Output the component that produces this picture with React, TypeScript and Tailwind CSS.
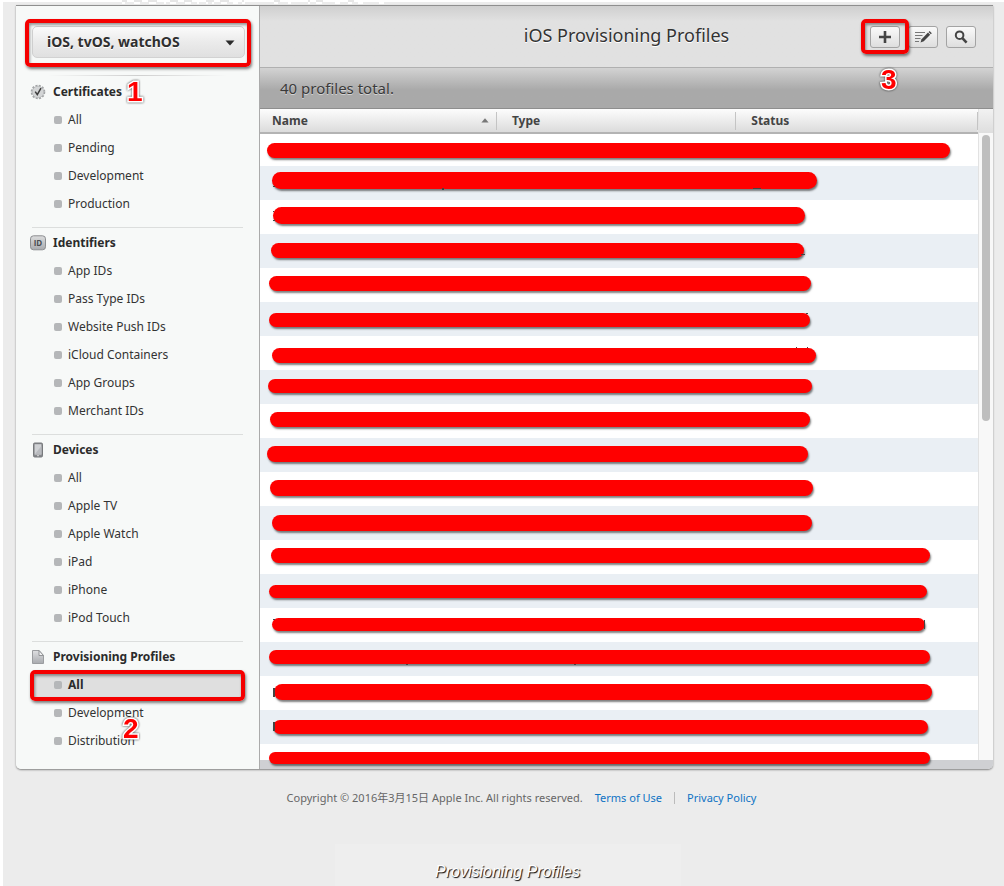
import React from "react";

type Section = { title: string; icon: React.ReactNode; items: string[]; active?: string };

const CertIcon = () => (
  <svg width="16" height="16" viewBox="0 0 16 16" aria-hidden="true">
    <circle cx="8" cy="8" r="6.3" fill="none" stroke="#a2a4a6" strokeWidth="2" strokeDasharray="2 1.3" />
    <circle cx="8" cy="8" r="5.8" fill="#d3d5d6" stroke="#b4b6b8" strokeWidth="0.8" />
    <path d="M5.2 7.6 L7.3 10.6 L11 4.2" fill="none" stroke="#3c3c3c" strokeWidth="1.5" />
  </svg>
);

const IdIcon = () => (
  <svg width="16" height="16" viewBox="0 0 16 16" aria-hidden="true">
    <defs>
      <linearGradient id="idFill" x1="0" y1="0" x2="0" y2="1">
        <stop offset="0" stopColor="#dcddde" />
        <stop offset="1" stopColor="#a9abae" />
      </linearGradient>
    </defs>
    <rect x="0.5" y="0.8" width="15" height="14" rx="3" fill="url(#idFill)" stroke="#8c8e91" />
    <text x="8" y="11" textAnchor="middle" fontSize="8" fontWeight="700" fill="#4a4c50" fontFamily="Open Sans, sans-serif">
      ID
    </text>
  </svg>
);

const DeviceIcon = () => (
  <svg width="16" height="16" viewBox="0 0 16 16" aria-hidden="true">
    <rect x="3.5" y="1" width="9" height="14" rx="1.2" fill="#85878b" stroke="#77797c" />
    <rect x="4.6" y="2.2" width="6.8" height="10.3" fill="#cfd1d4" />
    <path d="M4.6 12.5 L11.4 4 V12.5 Z" fill="#b9bbbf" />
    <rect x="7" y="13.2" width="2" height="1" fill="#d8d8d8" />
  </svg>
);

const FileIcon = () => (
  <svg width="16" height="16" viewBox="0 0 16 16" aria-hidden="true">
    <defs>
      <linearGradient id="fileFill" x1="0" y1="0" x2="0" y2="1">
        <stop offset="0" stopColor="#dfe0e2" />
        <stop offset="1" stopColor="#a8aaae" />
      </linearGradient>
    </defs>
    <path d="M2.5 1.5 H9 L13.5 6.5 V14.5 H2.5 Z" fill="url(#fileFill)" stroke="#9b9da0" />
    <path d="M9 1.5 V6.5 H13.5 Z" fill="#f3f3f4" stroke="#8b8d90" strokeWidth="0.9" />
  </svg>
);

const sections: Section[] = [
  { title: "Certificates", icon: <CertIcon />, items: ["All", "Pending", "Development", "Production"] },
  {
    title: "Identifiers",
    icon: <IdIcon />,
    items: ["App IDs", "Pass Type IDs", "Website Push IDs", "iCloud Containers", "App Groups", "Merchant IDs"],
  },
  {
    title: "Devices",
    icon: <DeviceIcon />,
    items: ["All", "Apple TV", "Apple Watch", "iPad", "iPhone", "iPod Touch"],
  },
  {
    title: "Provisioning Profiles",
    icon: <FileIcon />,
    items: ["All", "Development", "Distribution"],
    active: "All",
  },
];

type Box = { x: number; y: number; w: number; h: number };

/* Redaction strokes, one for each profile row, with the bits of row text that show past their edges. */
const strokes: (Box & { bits?: Box[] })[] = [
  { x: 7, y: 9, w: 683, h: 15 },
  { x: 12, y: 6, w: 545, h: 17, bits: [{ x: 13, y: 20, w: 2, h: 1 }, { x: 182, y: 22, w: 2, h: 2 }, { x: 493, y: 22, w: 8, h: 1 }] },
  { x: 13, y: 7, w: 532, h: 17, bits: [{ x: 13, y: 11, w: 1, h: 1 }, { x: 13, y: 20, w: 2, h: 1 }] },
  { x: 11, y: 9, w: 533, h: 15, bits: [{ x: 541, y: 20, w: 4, h: 1 }] },
  { x: 9, y: 8, w: 542, h: 15 },
  { x: 9, y: 11, w: 541, h: 14, bits: [{ x: 546, y: 11, w: 2, h: 1 }] },
  { x: 12, y: 12, w: 544, h: 15, bits: [{ x: 536, y: 11, w: 1, h: 1 }, { x: 547, y: 11, w: 1, h: 1 }] },
  { x: 8, y: 9, w: 544, h: 14 },
  { x: 10, y: 8, w: 540, h: 15 },
  { x: 7, y: 8, w: 541, h: 16 },
  { x: 10, y: 8, w: 543, h: 16 },
  { x: 12, y: 9, w: 540, h: 16 },
  { x: 11, y: 8, w: 659, h: 15 },
  { x: 9, y: 11, w: 658, h: 13 },
  { x: 12, y: 10, w: 653, h: 13, bits: [{ x: 13, y: 11, w: 2, h: 1 }, { x: 664, y: 12, w: 1, h: 9 }] },
  { x: 9, y: 8, w: 661, h: 14, bits: [{ x: 146, y: 22, w: 2, h: 1 }, { x: 314, y: 22, w: 2, h: 1 }] },
  { x: 14, y: 8, w: 658, h: 16, bits: [{ x: 13, y: 12, w: 2, h: 9 }] },
  { x: 13, y: 10, w: 655, h: 14, bits: [{ x: 13, y: 12, w: 2, h: 9 }] },
  { x: 9, y: 8, w: 661, h: 12 },
];

const Step = ({ n }: { n: number }) => (
  <span className="font-['Liberation_Sans',sans-serif] text-[28px] leading-none font-bold text-[#f00] [-webkit-text-stroke:3px_#fff] [paint-order:stroke_fill] drop-shadow-[0_0_1px_rgba(0,0,0,0.75)]">
    {n}
  </span>
);

const toolButton =
  "flex h-[22px] w-[30px] items-center justify-center rounded-[3px] border border-[#a3a3a3] bg-gradient-to-b from-[#fafafa] to-[#dedede] text-[#444]";

const redBox =
  "pointer-events-none absolute rounded-[5px] border-4 border-[#f50000] shadow-[1px_2px_3px_rgba(0,0,0,0.5),inset_1px_2px_3px_rgba(0,0,0,0.4)]";

function Sidebar() {
  return (
    <nav aria-label="Account resources" className="w-[244px] shrink-0 rounded-bl-[5px] border-r border-[#ababab] bg-[#f7f9f8] pb-3">
      <div className="relative mt-5 mr-3.5 ml-4 h-8">
        <select
          aria-label="Platform"
          className="h-full w-full appearance-none rounded-[5px] border border-[#d2d2d2] bg-gradient-to-b from-[#fbfbfb] via-[#ebebeb] to-[#e0e0e0] pl-3.5 text-sm font-bold text-[#2f2f2f] [text-shadow:0_1px_0_#fff]"
        >
          <option>iOS, tvOS, watchOS</option>
        </select>
        <svg className="pointer-events-none absolute top-3.5 right-2.5" width="10" height="6" viewBox="0 0 10 6" aria-hidden="true">
          <path d="M0.5 0.5 H9.5 L5 5.5 Z" fill="#2b2b2b" />
        </svg>
        <span className={`${redBox} -top-[7px] -right-1.5 -bottom-[9px] -left-[7px]`} />
      </div>
      <div className="mx-8 mt-[17px] h-px bg-gradient-to-r from-transparent via-[#cfcfcf] to-transparent" />
      <div className="mt-0.5 flex flex-col gap-[11px]">
        {sections.map((s, i) => (
          <section
            key={s.title}
            className={i ? "relative before:absolute before:inset-x-4 before:-top-0.5 before:h-px before:bg-[#dcdedd]" : "relative"}
          >
            <h2 className="flex h-7 items-center gap-[7px] pl-3.5 text-xs font-bold text-[#2b2b2b]">
              {s.icon}
              <span>{s.title}</span>
              {i === 0 && (
                <span className="absolute top-0 left-[111px]">
                  <Step n={1} />
                </span>
              )}
            </h2>
            <ul>
              {s.items.map((item) => {
                const active = s.active === item;
                return (
                  <li key={item} className="relative px-4">
                    <a
                      href="#"
                      aria-current={active ? "page" : undefined}
                      className={
                        active
                          ? "flex h-7 items-center gap-1.5 bg-[#dfdfdf] pl-[22px] text-xs font-bold text-[#2b2b2b]"
                          : "flex h-7 items-center gap-1.5 pl-[22px] text-xs text-[#333]"
                      }
                    >
                      <span className="size-2 rounded-xs bg-[#b5b7b9]" />
                      {item}
                    </a>
                    {active && <span className={`${redBox} inset-x-3.5 -top-px -bottom-0.5`} />}
                    {item === "Distribution" && (
                      <span className="absolute -top-3 left-[107px]">
                        <Step n={2} />
                      </span>
                    )}
                  </li>
                );
              })}
            </ul>
          </section>
        ))}
      </div>
    </nav>
  );
}

function Toolbar() {
  return (
    <header className="relative flex h-[62px] items-start justify-center border-b border-[#b0b0b0] bg-gradient-to-b from-[#cfcfcf] via-[#e1e1e1] via-25% to-[#e1e1e1]">
      <h1 className="mt-4 text-lg leading-[26px] text-[#333] [text-shadow:0_1px_0_#fff]">iOS Provisioning Profiles</h1>
      <div className="absolute top-5 right-[17px] flex gap-2">
        <div className="relative">
          <button type="button" aria-label="Add profile" className={toolButton}>
            <svg width="14" height="14" viewBox="0 0 14 14" aria-hidden="true">
              <path d="M7 1 V13 M1 7 H13" stroke="#444" strokeWidth="2.6" />
            </svg>
          </button>
          <span className={`${redBox} -inset-x-[9px] -top-[7px] -bottom-[6px]`} />
          <span className="absolute top-10 left-[11px]">
            <Step n={3} />
          </span>
        </div>
        <button type="button" aria-label="Edit profiles" className={toolButton}>
          <svg width="18" height="14" viewBox="0 0 18 14" aria-hidden="true">
            <path d="M1 2.5 H11 M1 5.5 H8.5 M1 8.5 H6.5 M1 11.5 H5" stroke="#777" strokeWidth="1" />
            <path d="M6.5 12.5 L7.6 9.2 L14 2.6 L16.2 4.8 L9.8 11.3 Z" fill="#444" />
            <path d="M14.6 2 L15.6 1 L17.8 3.2 L16.8 4.2 Z" fill="#444" />
          </svg>
        </button>
        <button type="button" aria-label="Search profiles" className={toolButton}>
          <svg width="14" height="14" viewBox="0 0 14 14" aria-hidden="true">
            <circle cx="5.6" cy="5.2" r="3.8" fill="none" stroke="#444" strokeWidth="2" />
            <path d="M8.4 8.2 L12.6 12.6" stroke="#444" strokeWidth="2.6" />
          </svg>
        </button>
      </div>
    </header>
  );
}

function ProfileTable() {
  const head = "border-b-2 border-[#b3b3b3] p-0 text-left font-bold";
  return (
    <div className="flex grow bg-white">
      <div className="relative z-10 grow">
        <table className="w-full table-fixed border-collapse text-xs text-[#444]">
          <colgroup>
            <col className="w-[33%]" />
            <col className="w-1/3" />
            <col />
          </colgroup>
          <thead>
            <tr className="h-6 bg-gradient-to-b from-[#fdfdfd] to-[#dadada]">
              <th scope="col" className={head}>
                <div className="flex h-[18px] items-center justify-between border-r border-[#c4c4c4] pr-[7px] pl-3">
                  Name
                  <svg width="8" height="5" viewBox="0 0 8 5" aria-hidden="true">
                    <path d="M4 0.3 L7.6 4.5 H0.4 Z" fill="#777" />
                  </svg>
                </div>
              </th>
              <th scope="col" className={head}>
                <div className="flex h-[18px] items-center border-r border-[#c4c4c4] pl-[15px]">Type</div>
              </th>
              <th scope="col" className={head}>
                <div className="flex h-[18px] items-center border-r border-[#c4c4c4] pl-[15px]">Status</div>
              </th>
            </tr>
          </thead>
          <tbody>
            {strokes.map((s, i) => (
              <tr key={i} className={i % 2 ? "bg-[#eaeff4]" : "bg-white"}>
                <td colSpan={3} className="p-0">
                  <div className={i === strokes.length - 1 ? "relative h-4" : i === 0 ? "relative h-8" : "relative h-[34px]"}>
                    <span
                      className="absolute rounded-full bg-[#f00] shadow-[1px_2px_2px_rgba(0,0,0,0.5)]"
                      style={{ left: s.x, top: s.y, width: s.w, height: s.h }}
                    />
                    {s.bits?.map((b, j) => (
                      <span key={j} className="absolute bg-[#444]" style={{ left: b.x, top: b.y, width: b.w, height: b.h }} />
                    ))}
                  </div>
                </td>
              </tr>
            ))}
          </tbody>
        </table>
      </div>
      <div className="w-[15px] shrink-0 border-l border-[#e2e2e2] bg-[#f8f8f8]">
        <div className="h-6 bg-gradient-to-b from-[#f2f2f2] to-[#dedede]" />
        <div className="mx-[3px] mt-0.5 h-[286px] rounded-full bg-[#bebebe]" />
      </div>
    </div>
  );
}

export default function App() {
  return (
    <div className="flex min-h-screen flex-col bg-white pt-0.5 pl-[3px] font-['Noto_Sans','Open_Sans','Noto_Sans_CJK_SC',sans-serif]">
      <div className="relative flex grow flex-col bg-[#ececec]">
        <svg className="absolute -top-0.5 left-[117px]" width="270" height="4" viewBox="0 0 270 4" aria-hidden="true">
          <path
            d="M2 3 H5 M14 3 H20 M29 3 H36 M44 3 H46 M50 3 H56 M65 3 H71 M77 3 H79 M86 3 H88 M92 3 H94 M101 3 H107 M113 3 H118 M122 3 H125 M154 3 H158 M168 3 H171 M188 3 H190 M196 3 H202 M215 3 H220 M228 3 H232 M238 3 H243 M259 3 H264"
            stroke="#fff"
            strokeWidth="2"
          />
          <path
            d="M2 1 H7 M14 1 H22 M28 1 H37 M50 1 H58 M64 1 H72 M86 1 H94 M100 1 H109 M122 1 H124 M154 1 H160 M188 1 H190 M196 1 H203 M228 1 H234"
            stroke="#e6e6e6"
            strokeWidth="2"
          />
        </svg>
        <main className="mt-[3px] mr-[11px] ml-[13px] flex rounded-b-[5px] border-t border-[#8f8f8f] shadow-[0_1px_2px_rgba(0,0,0,0.45)]">
          <Sidebar />
          <div className="flex min-w-0 grow flex-col rounded-br-[5px] bg-[#cfd0d3] pb-[9px]">
            <Toolbar />
            <p className="flex h-[41px] items-center border-b border-[#8e8e8e] bg-gradient-to-b from-[#d3d3d3] to-[#a9a9a9] to-55% pl-5 text-[15px] text-[#3a3a3a] [text-shadow:0_1px_0_rgba(255,255,255,0.5)]">
              40 profiles total.
            </p>
            <ProfileTable />
          </div>
        </main>
        <footer className="mt-[21px] flex justify-center pl-9 text-[11px] leading-4 text-[#666]">
          <p>Copyright © 2016年3月15日 Apple Inc. All rights reserved.</p>
          <a href="#" className="ml-3 text-[#0e73c4]">
            Terms of Use
          </a>
          <span className="mx-3 mt-0.5 h-3 w-px bg-[#bbb]" />
          <a href="#" className="text-[#0e73c4]">
            Privacy Policy
          </a>
        </footer>
        <div className="mt-auto ml-2 flex h-[42px] w-[346px] items-center justify-center self-center bg-[#eeeeee] pt-3.5 font-['Liberation_Sans',sans-serif] text-base text-white italic [text-shadow:1px_1px_1px_#000]">
          Provisioning Profiles
        </div>
      </div>
    </div>
  );
}
